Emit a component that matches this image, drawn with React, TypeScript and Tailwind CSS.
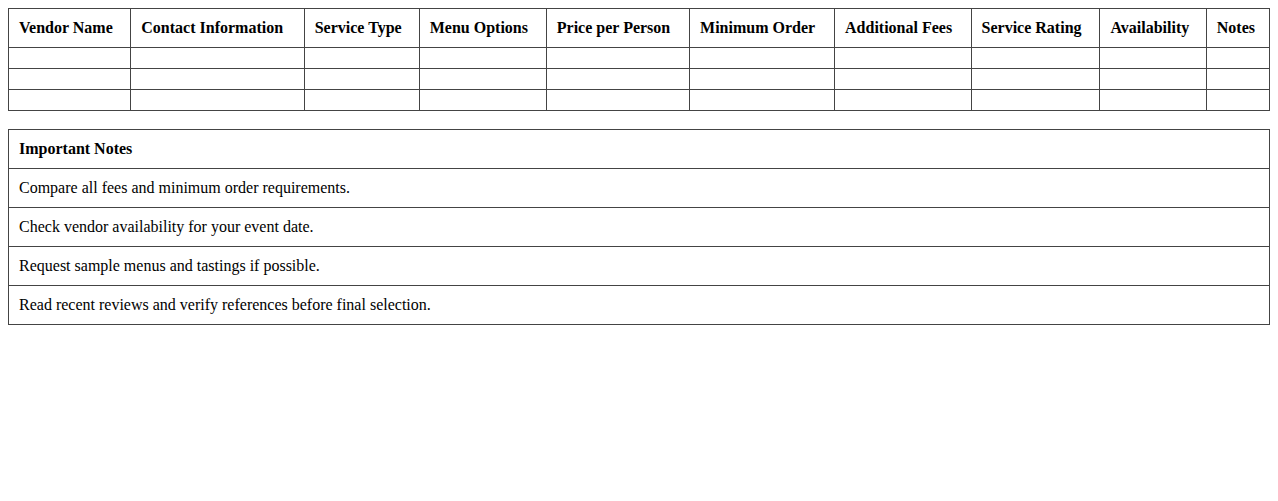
const columns = [
  'Vendor Name',
  'Contact Information',
  'Service Type',
  'Menu Options',
  'Price per Person',
  'Minimum Order',
  'Additional Fees',
  'Service Rating',
  'Availability',
  'Notes',
];

const notes = [
  'Compare all fees and minimum order requirements.',
  'Check vendor availability for your event date.',
  'Request sample menus and tastings if possible.',
  'Read recent reviews and verify references before final selection.',
];

export default function App() {
  return (
    <div className="min-h-[501px] bg-white p-2 text-[16px] text-black font-['Liberation_Serif','Times_New_Roman',serif]">
      {/* vendor comparison grid */}
      <table className="w-full border-collapse">
        <thead>
          <tr>
            {columns.map((c) => (
              <th key={c} className="border border-[#444] p-2.5 text-left font-bold leading-[18px]">
                {c}
              </th>
            ))}
          </tr>
        </thead>
        <tbody>
          {[0, 1, 2].map((r) => (
            <tr key={r}>
              {columns.map((c) => (
                <td key={c} className="border border-[#444] p-2.5"></td>
              ))}
            </tr>
          ))}
        </tbody>
      </table>

      {/* notes block */}
      <table className="mt-[18px] w-full border-collapse">
        <tbody>
          <tr>
            <th className="border border-[#444] p-2.5 text-left font-bold leading-[18px]">Important Notes</th>
          </tr>
          {notes.map((n) => (
            <tr key={n}>
              <td className="border border-[#444] p-2.5 leading-[18px]">{n}</td>
            </tr>
          ))}
        </tbody>
      </table>
    </div>
  );
}
